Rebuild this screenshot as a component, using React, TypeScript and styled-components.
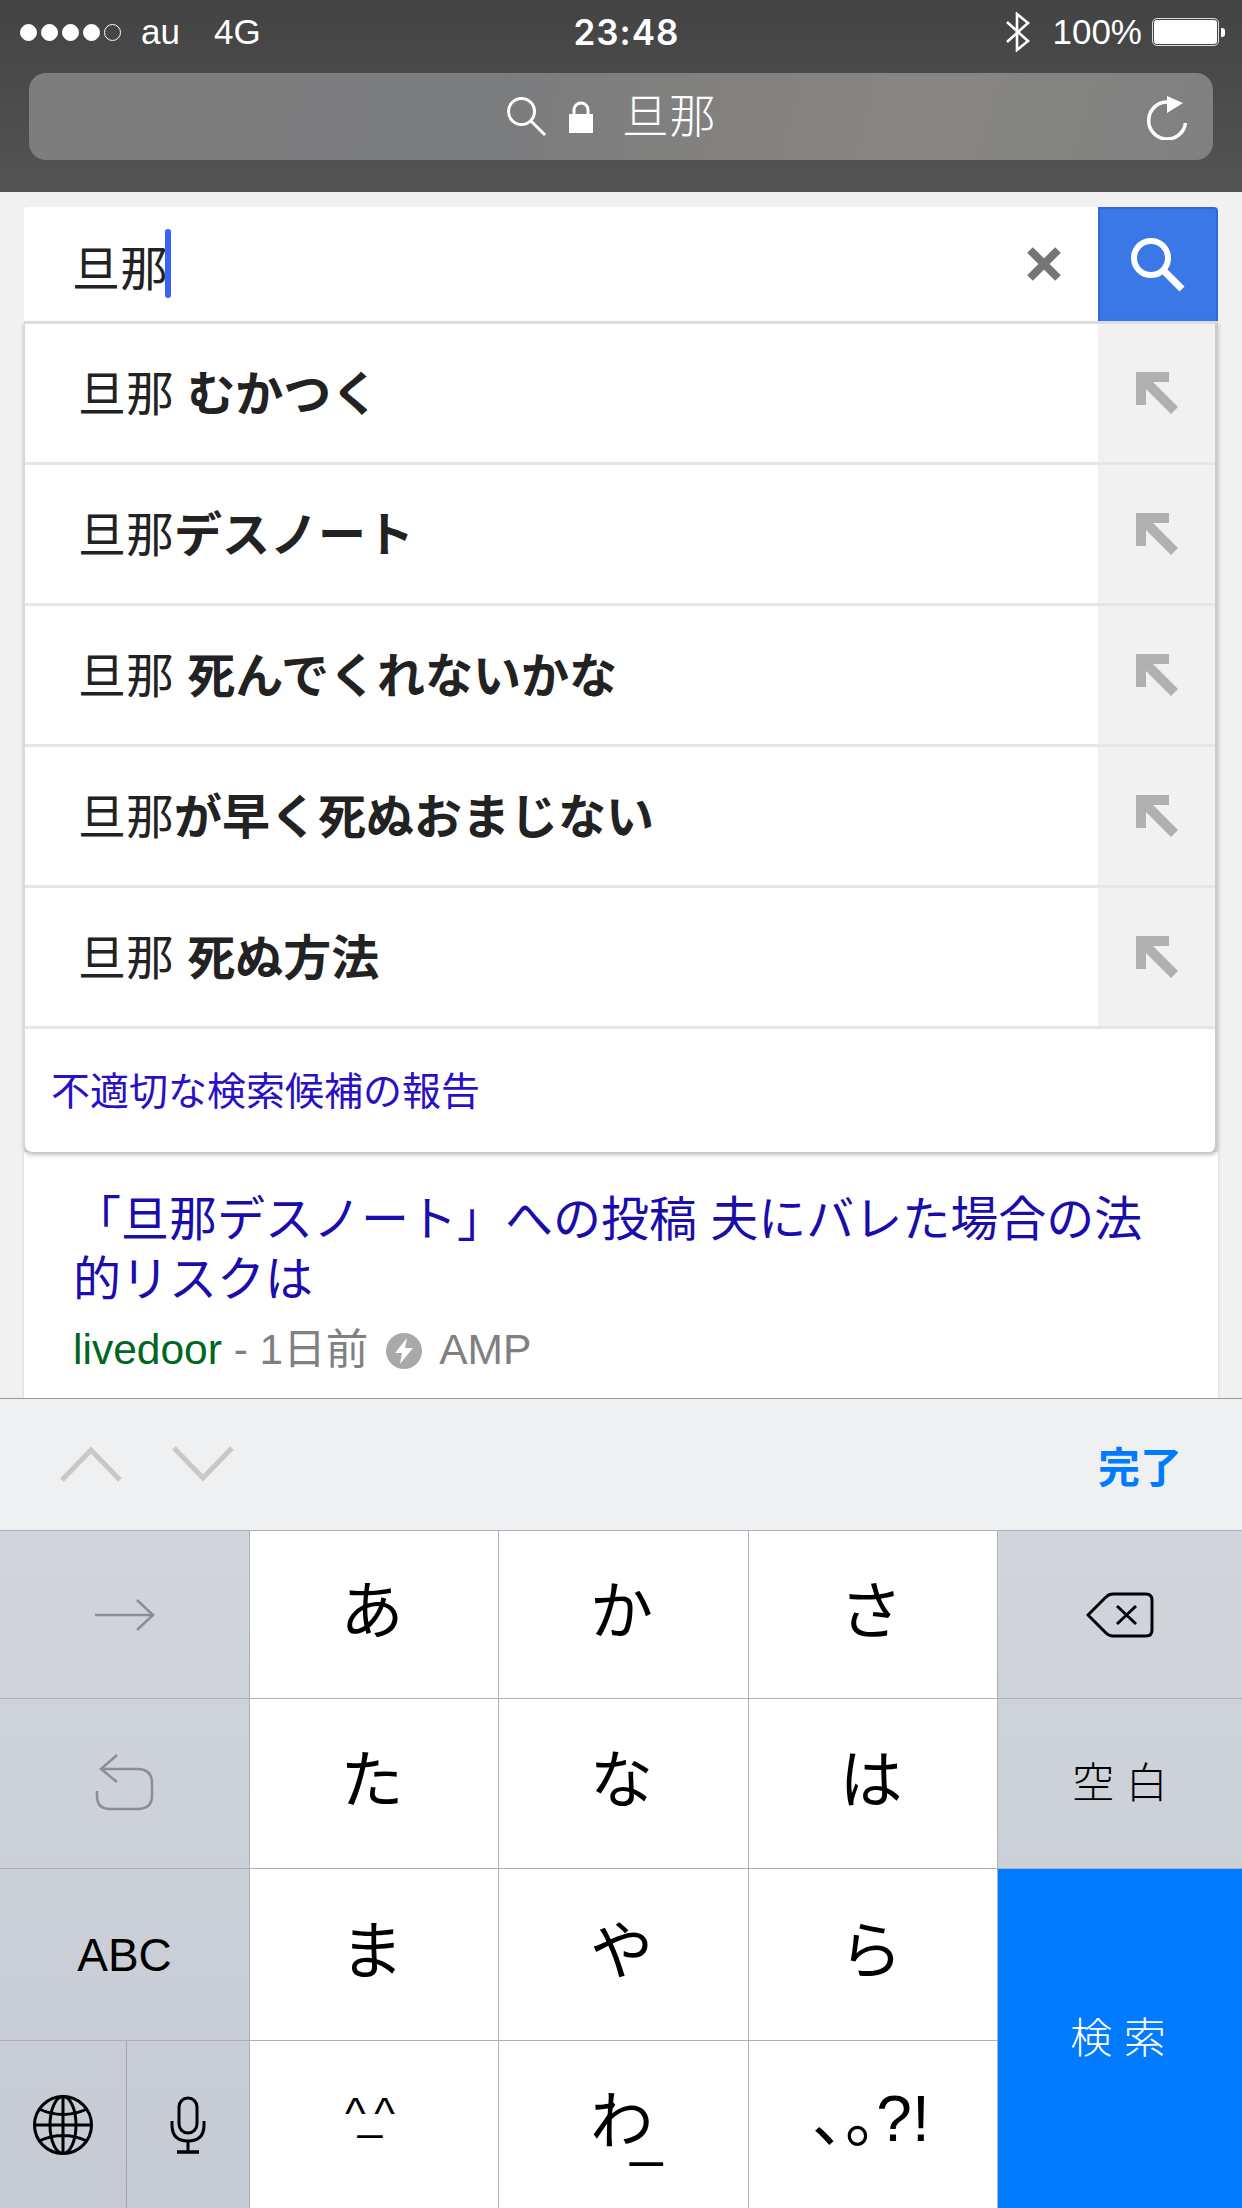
import React from 'react';
import styled, { createGlobalStyle } from 'styled-components';

const GlobalStyle = createGlobalStyle`
    html, body{
        margin: 0;
        padding: 0;
        background: #f1f1f1;
    }
    *{
        box-sizing: border-box;
    }
`;

const SANS = `"Liberation Sans", "Noto Sans CJK JP", sans-serif`;

const suggestions = [
    { lead: '旦那 ', rest: 'むかつく' },
    { lead: '旦那', rest: 'デスノート' },
    { lead: '旦那 ', rest: '死んでくれないかな' },
    { lead: '旦那', rest: 'が早く死ぬおまじない' },
    { lead: '旦那 ', rest: '死ぬ方法' },
];

export default function App() {
    return (
        <Page>
            <GlobalStyle />
            <Header>
                <StatusBar>
                    <StatusLeft>
                        <Signal>
                            <Dot /><Dot /><Dot /><Dot /><Dot $empty />
                        </Signal>
                        <span>au</span>
                        <span>4G</span>
                    </StatusLeft>
                    <Clock>23:48</Clock>
                    <StatusRight>
                        <svg width="26" height="40" viewBox="0 0 26 40" fill="none" stroke="#fff" strokeWidth="2.6">
                            <path d="M2 10 L23 29 L12 38 V2 L23 11 L2 30" />
                        </svg>
                        <Percent>100%</Percent>
                        <Battery><BatteryFill /></Battery>
                    </StatusRight>
                </StatusBar>
                <UrlBar>
                    <span />
                    <UrlCenter>
                        <svg width="42" height="40" viewBox="0 0 42 40" fill="none" stroke="#fff" strokeWidth="3">
                            <circle cx="15.5" cy="14.5" r="13" />
                            <path d="M25 24 L39 38" />
                        </svg>
                        <svg width="24" height="32" viewBox="0 0 24 32">
                            <path d="M5 14 V9 a7 7 0 0 1 14 0 V14" fill="none" stroke="#fff" strokeWidth="3" />
                            <rect x="0" y="13" width="24" height="19" fill="#fff" />
                        </svg>
                        <UrlText>旦那</UrlText>
                    </UrlCenter>
                    <Reload>
                        <svg width="44" height="46" viewBox="0 0 44 46" fill="none">
                            <path d="M39.5 29 A18.5 18.5 0 1 1 22 8" stroke="#fff" strokeWidth="3.5" />
                            <path d="M21 2 L37 9 L21 19 Z" fill="#fff" />
                        </svg>
                    </Reload>
                </UrlBar>
            </Header>

            <Content>
                <SearchRow>
                    <SearchField>
                        <SearchText>旦那</SearchText>
                        <Caret />
                        <ClearIcon>
                            <svg width="34" height="34" viewBox="0 0 34 34" fill="none" stroke="#757575" strokeWidth="8">
                                <path d="M3 3 L31 31 M31 3 L3 31" />
                            </svg>
                        </ClearIcon>
                    </SearchField>
                    <SearchButton>
                        <svg width="56" height="56" viewBox="0 0 56 56" fill="none" stroke="#fff">
                            <circle cx="21" cy="21" r="17" strokeWidth="6" />
                            <path d="M33 33 L52 52" strokeWidth="7" />
                        </svg>
                    </SearchButton>
                </SearchRow>
                <Suggestions>
                    {suggestions.map((s) => (
                        <SuggestionRow key={s.rest}>
                            <SuggestionText>
                                {s.lead}<strong>{s.rest}</strong>
                            </SuggestionText>
                            <ArrowCell>
                                <svg width="42" height="42" viewBox="0 0 42 42" fill="#b0b0b0">
                                    <path d="M0 0 H33 V10 H17 L42 35 L35 42 L10 17 V33 H0 Z" />
                                </svg>
                            </ArrowCell>
                        </SuggestionRow>
                    ))}
                    <ReportLink>不適切な検索候補の報告</ReportLink>
                </Suggestions>
                <ResultCard>
                    <ResultTitle>「旦那デスノート」への投稿 夫にバレた場合の法的リスクは</ResultTitle>
                    <ResultMeta>
                        <Source>livedoor</Source>
                        {' - 1日前'}
                        <svg width="38" height="38" viewBox="0 0 38 38">
                            <circle cx="19" cy="19" r="18" fill="#a9a9a9" />
                            <path d="M22 6 L10 21 H17 L15 32 L28 16 H20 Z" fill="#fff" />
                        </svg>
                        AMP
                    </ResultMeta>
                </ResultCard>
            </Content>

            <Toolbar>
                <Chevrons>
                    <svg width="62" height="36" viewBox="0 0 62 36" fill="none" stroke="#c8c8c8" strokeWidth="5">
                        <path d="M2 34 L31 4 L60 34" />
                    </svg>
                    <svg width="62" height="36" viewBox="0 0 62 36" fill="none" stroke="#c8c8c8" strokeWidth="5">
                        <path d="M2 2 L31 32 L60 2" />
                    </svg>
                </Chevrons>
                <Done>完了</Done>
            </Toolbar>

            <Keyboard>
                <Key $tone="gray">
                    <svg width="60" height="32" viewBox="0 0 60 32" fill="none" stroke="#8c8e93" strokeWidth="2.5">
                        <path d="M0 16 H57 M42 1 L58 16 L42 31" />
                    </svg>
                </Key>
                <Key $kana>あ</Key>
                <Key $kana>か</Key>
                <Key $kana>さ</Key>
                <Key $tone="gray">
                    <svg width="68" height="46" viewBox="0 0 68 46" fill="none" stroke="#000" strokeWidth="3">
                        <path d="M2 23 L20 5 Q23 2 27 2 H60 Q66 2 66 8 V38 Q66 44 60 44 H27 Q23 44 20 41 Z" strokeLinejoin="round" />
                        <path d="M31 14 L50 32 M50 14 L31 32" />
                    </svg>
                </Key>

                <Key $tone="gray">
                    <svg width="60" height="60" viewBox="0 0 60 60" fill="none" stroke="#8c8e93" strokeWidth="2.5">
                        <path d="M22 1 L6 15 L22 28 M6 15 H42 Q57 15 57 29 V42 Q57 55 42 55 H15 Q2 55 2 42 V37" />
                    </svg>
                </Key>
                <Key $kana>た</Key>
                <Key $kana>な</Key>
                <Key $kana>は</Key>
                <Key $tone="gray" $small>空 白</Key>

                <Key $tone="gray" $latin>ABC</Key>
                <Key $kana>ま</Key>
                <Key $kana>や</Key>
                <Key $kana>ら</Key>
                <Key $tone="blue" $small $tall>検 索</Key>

                <SplitKey>
                    <HalfKey>
                        <svg width="62" height="62" viewBox="0 0 62 62" fill="none" stroke="#000" strokeWidth="3">
                            <circle cx="31" cy="31" r="28.5" />
                            <ellipse cx="31" cy="31" rx="13" ry="28.5" />
                            <path d="M31 2 V60 M2.5 31 H59.5 M7 15 Q31 26 55 15 M7 47 Q31 36 55 47" />
                        </svg>
                    </HalfKey>
                    <HalfKey>
                        <svg width="36" height="58" viewBox="0 0 36 58" fill="none" stroke="#000" strokeWidth="3">
                            <rect x="9" y="2" width="18" height="35" rx="9" />
                            <path d="M2 25 V29 Q2 45 18 45 Q34 45 34 29 V25 M18 45 V56" />
                            <path d="M7 56 H29" strokeWidth="3.5" />
                        </svg>
                    </HalfKey>
                </SplitKey>
                <Key $latin><Smiley>^_^</Smiley></Key>
                <Key $kana>わ<Underscore>_</Underscore></Key>
                <Key $kana><Punctuation>、。?!</Punctuation></Key>
            </Keyboard>
        </Page>
    );
}

const Page = styled.div`
    width: 1242px;
    height: 2208px;
    overflow: hidden;
    display: flex;
    flex-direction: column;
    font-family: ${SANS};
    background: #f1f1f1;
`;

const Header = styled.header`
    height: 192px;
    flex: none;
    padding: 0 29px;
    background: linear-gradient(180deg, #434343, #545454);
    color: #fff;
`;

const StatusBar = styled.div`
    height: 73px;
    margin: 0 -29px;
    padding: 0 23px 9px 20px;
    display: grid;
    grid-template-columns: 1fr auto 1fr;
    align-items: center;
    font-size: 35px;
`;

const StatusLeft = styled.div`
    display: flex;
    align-items: center;
    gap: 34px;
`;

const Signal = styled.div`
    display: flex;
    gap: 4px;
    margin-right: -14px;
`;

const Dot = styled.i<{ $empty?: boolean }>`
    width: 17px;
    height: 17px;
    border-radius: 50%;
    border: 1.5px solid #fff;
    background: ${(p) => (p.$empty ? 'transparent' : '#fff')};
`;

const Clock = styled.div`
    font-family: Inter, sans-serif;
    font-weight: 600;
    font-size: 35px;
    letter-spacing: 1px;
    margin-left: 14px;
`;

const StatusRight = styled.div`
    display: flex;
    align-items: center;
    justify-content: flex-end;
    gap: 21px;
`;

const Percent = styled.span`
    margin-right: -11px;
`;

const Battery = styled.div`
    position: relative;
    width: 67px;
    height: 28px;
    padding: 1px;
    border: 1px solid #ddd;
    border-radius: 5px;
    &::after{
        content: '';
        position: absolute;
        right: -7px;
        top: 9px;
        width: 4px;
        height: 9px;
        background: #fff;
        border-radius: 0 3px 3px 0;
    }
`;

const BatteryFill = styled.div`
    height: 100%;
    background: #fff;
    border-radius: 3px;
`;

const UrlBar = styled.div`
    height: 87px;
    display: grid;
    grid-template-columns: 1fr auto 1fr;
    align-items: center;
    border-radius: 17px;
    background: linear-gradient(105deg, #7d7d7d 0%, #7b7c7e 40%, #82817f 58%, #878684 75%, #808080 100%);
`;

const UrlCenter = styled.div`
    display: flex;
    align-items: center;
    margin-right: 20px;
    svg:nth-child(2){
        margin: 0 29px 0 21px;
    }
`;

const UrlText = styled.span`
    font-size: 47px;
    line-height: 1;
    font-weight: 300;
`;

const Reload = styled.div`
    display: flex;
    justify-content: flex-end;
    padding-right: 23px;
`;

const Content = styled.main`
    flex: 1;
    min-height: 0;
    padding: 15px 24px 0;
    display: flex;
    flex-direction: column;
`;

const SearchRow = styled.div`
    height: 114px;
    flex: none;
    display: flex;
    background: #fff;
    border-radius: 4px 4px 0 0;
`;

const SearchField = styled.div`
    flex: 1;
    display: flex;
    align-items: center;
    padding: 0 37px 0 48px;
`;

const SearchText = styled.span`
    font-size: 48px;
    color: #222;
    margin-top: 1px;
`;

const Caret = styled.i`
    width: 6px;
    height: 69px;
    margin: -1px 0 0 -3px;
    border-radius: 3px;
    background: #3b62f0;
`;

const ClearIcon = styled.div`
    margin-left: auto;
    display: flex;
`;

const SearchButton = styled.div`
    width: 120px;
    display: flex;
    align-items: center;
    justify-content: center;
    background: #3b78e7;
    border: 2px solid #3367d6;
    border-bottom: none;
    border-radius: 0 4px 0 0;
`;

const Suggestions = styled.section`
    position: relative;
    z-index: 1;
    flex: none;
    border-top: 3px solid #dcdcdc;
    border-left: 1px solid #d8d8d8;
    border-right: 3px solid #cccccc;
    background: #fff;
    border-radius: 0 0 8px 8px;
    box-shadow: 0 3px 4px rgba(0, 0, 0, 0.25);
`;

const SuggestionRow = styled.div`
    height: 141px;
    display: grid;
    grid-template-columns: 1fr 117px;
    border-bottom: 3px solid #e6e6e6;
`;

const SuggestionText = styled.div`
    display: flex;
    align-items: center;
    white-space: pre;
    padding: 0 0 6px 53px;
    font-size: 48px;
    color: #222;
    strong{
        font-weight: 700;
    }
`;

const ArrowCell = styled.div`
    display: flex;
    align-items: center;
    justify-content: center;
    background: #f1f1f1;
`;

const ReportLink = styled.div`
    height: 123px;
    display: flex;
    align-items: center;
    padding: 0 0 6px 26px;
    font-size: 39px;
    color: #2a10c4;
`;

const ResultCard = styled.article`
    flex: 1;
    background: #fff;
    padding: 38px 49px 0;
    box-shadow: 0 0 3px rgba(0, 0, 0, 0.15);
`;

const ResultTitle = styled.h3`
    margin: 0;
    font-size: 48px;
    line-height: 60px;
    font-weight: 400;
    color: #1a0dab;
`;

const ResultMeta = styled.div`
    margin-top: 10px;
    white-space: pre;
    font-size: 42.5px;
    line-height: 60px;
    color: #808080;
    svg{
        vertical-align: -6px;
        margin: 0 16px 0 17px;
    }
`;

const Source = styled.span`
    color: #006621;
`;

const Toolbar = styled.div`
    height: 132px;
    flex: none;
    display: flex;
    align-items: center;
    justify-content: space-between;
    padding: 0 60px;
    border-top: 1px solid #999;
    background: #eff0f2;
`;

const Chevrons = styled.div`
    display: flex;
    gap: 50px;
    margin-bottom: 2px;
`;

const Done = styled.div`
    font-size: 42px;
    font-weight: 700;
    color: #007aff;
`;

const Keyboard = styled.div`
    height: 678px;
    flex: none;
    display: grid;
    grid-template-columns: 249px 249px 250px 249px 245px;
    grid-template-rows: 168px 170px 172px 168px;
    background: linear-gradient(180deg, #d1d5db, #c6cad3);
`;

const Key = styled.div<{ $tone?: 'gray' | 'blue'; $small?: boolean; $latin?: boolean; $tall?: boolean; $kana?: boolean }>`
    display: flex;
    align-items: center;
    justify-content: center;
    border-left: 1px solid #adb0b8;
    border-top: 1px solid #adb0b8;
    color: ${(p) => (p.$tone === 'blue' ? '#fff' : '#000')};
    background: ${(p) => (p.$tone === 'blue' ? '#007aff' : p.$tone === 'gray' ? 'transparent' : '#fff')};
    font-size: ${(p) => (p.$small ? '42px' : p.$latin ? '46px' : '63px')};
    font-weight: ${(p) => (p.$small ? 300 : 400)};
    padding: 0 ${(p) => (p.$kana ? '4px' : p.$tone === 'blue' ? '4px' : '0')} ${(p) => (p.$kana ? '18px' : p.$small ? '8px' : '0')} 0;
    grid-row: ${(p) => (p.$tall ? 'span 2' : 'auto')};
    &:nth-child(5n + 1){
        border-left: none;
    }
`;

const Smiley = styled.span`
    font-size: 44px;
    letter-spacing: -8px;
    margin: 0 0 22px -16px;
`;

const Underscore = styled.span`
    position: relative;
    top: 19px;
    font-size: 58px;
    line-height: 0;
    margin-left: -23px;
    margin-right: -10px;
`;

const Punctuation = styled.span`
    font-feature-settings: "palt";
    font-size: 64px;
    margin-bottom: 6px;
`;

const SplitKey = styled.div`
    display: grid;
    grid-template-columns: 126px 1fr;
    border-top: 1px solid #adb0b8;
`;

const HalfKey = styled.div`
    display: flex;
    align-items: center;
    justify-content: center;
    & + &{
        border-left: 1px solid #a4a7ae;
    }
`;
